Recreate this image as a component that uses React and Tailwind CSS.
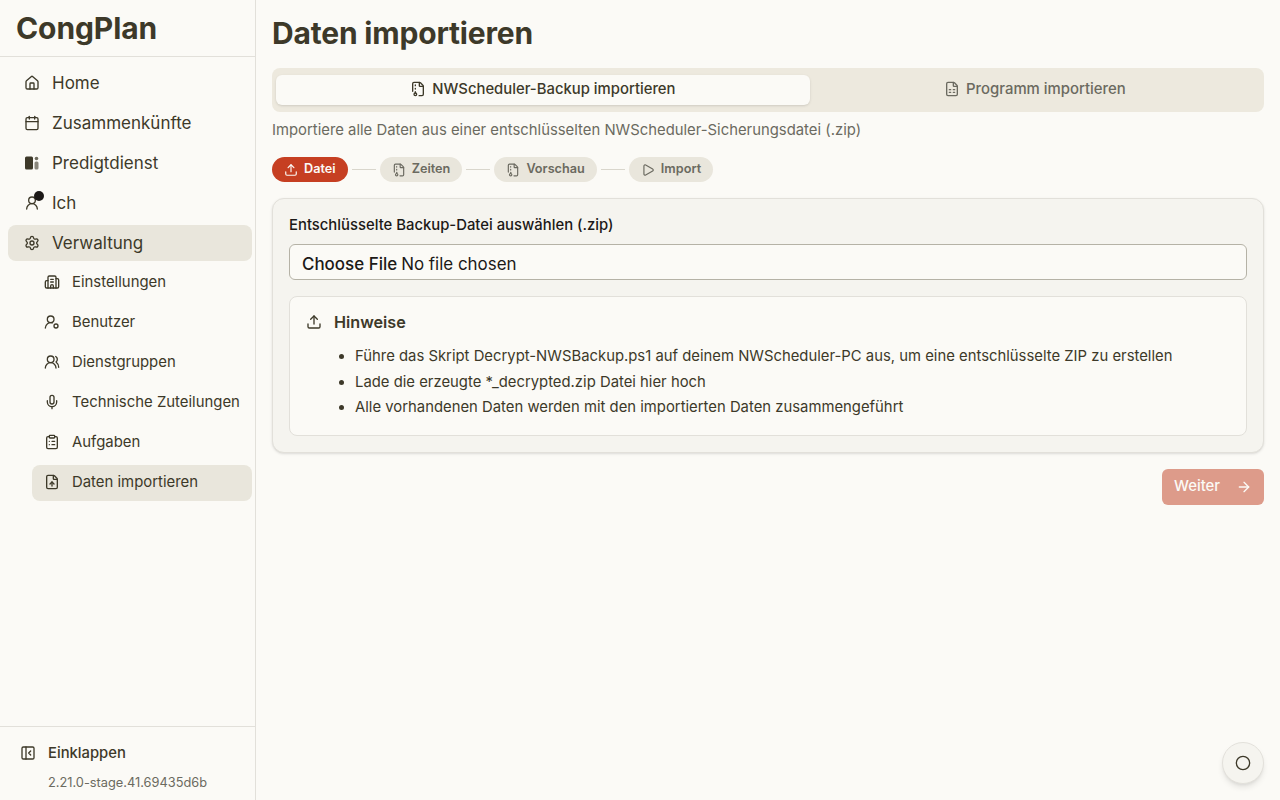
import React from "react";
import {
  House,
  Calendar,
  UserRound,
  Settings,
  Building2,
  UsersRound,
  Mic,
  ClipboardList,
  FileUp,
  FileArchive,
  FileSpreadsheet,
  Upload,
  Play,
  ArrowRight,
  PanelLeftClose,
  Circle,
} from "lucide-react";

const PreachIcon = () => (
  <svg width="16" height="16" viewBox="0 0 16 16" fill="currentColor">
    <rect x="1" y="1.5" width="8" height="13" rx="1.5" />
    <circle cx="12.5" cy="3.5" r="1.8" opacity="0.75" />
    <rect x="10.5" y="6.5" width="4" height="8" rx="1.5" opacity="0.6" />
  </svg>
);

const UserRing = () => (
  <svg width="16" height="16" viewBox="0 0 24 24" fill="none" stroke="currentColor" strokeWidth="2" strokeLinecap="round" strokeLinejoin="round">
    <path d="M2 21a8 8 0 0 1 10.4-7.6" />
    <circle cx="10" cy="8" r="5" />
    <circle cx="18" cy="18" r="3" />
  </svg>
);

const mainNav = [
  { label: "Home", icon: <House size={16} /> },
  { label: "Zusammenkünfte", icon: <Calendar size={16} /> },
  { label: "Predigtdienst", icon: <PreachIcon /> },
  {
    label: "Ich",
    icon: (
      <span className="relative block">
        <UserRound size={16} />
        <span className="absolute -top-[4px] -right-[4px] w-[10px] h-[10px] rounded-full bg-[#1c1917]" />
      </span>
    ),
  },
  { label: "Verwaltung", icon: <Settings size={16} />, active: true },
];

const subNav = [
  { label: "Einstellungen", icon: <Building2 size={16} /> },
  { label: "Benutzer", icon: <UserRing /> },
  { label: "Dienstgruppen", icon: <UsersRound size={16} /> },
  { label: "Technische Zuteilungen", icon: <Mic size={16} /> },
  { label: "Aufgaben", icon: <ClipboardList size={16} /> },
  { label: "Daten importieren", icon: <FileUp size={16} />, active: true },
];

const steps = [
  { label: "Datei", icon: <Upload size={14} />, active: true },
  { label: "Zeiten", icon: <FileArchive size={14} /> },
  { label: "Vorschau", icon: <FileArchive size={14} /> },
  { label: "Import", icon: <Play size={14} /> },
];

export default function App() {
  return (
    <div className="flex h-screen overflow-hidden bg-[#fbfaf6] text-[#3d3929] font-['Inter',sans-serif]">
      <aside className="w-[256px] shrink-0 border-r border-[#e2e0da] flex flex-col">
        <div className="h-[57px] border-b border-[#e2e0da] px-4 flex items-center">
          <h1 className="text-[30px] font-bold leading-none tracking-[-0.1px]">CongPlan</h1>
        </div>
        <nav className="flex-1 pl-2 pr-[3px] py-2 flex flex-col gap-1">
          {mainNav.map((item) => (
            <a
              key={item.label}
              className={`h-9 px-4 flex items-center gap-3 rounded-lg text-[17px] font-normal ${item.active ? "bg-[#e9e6dc]" : ""}`}
            >
              {item.icon}
              <span className="pt-[2px]">{item.label}</span>
            </a>
          ))}
          <div className="ml-6 flex flex-col gap-1">
            {subNav.map((item) => (
              <a
                key={item.label}
                className={`h-9 px-3 pb-[2px] flex items-center gap-3 rounded-lg text-[14.9px] ${item.active ? "bg-[#e9e6dc]" : ""}`}
              >
                {item.icon}
                {item.label}
              </a>
            ))}
          </div>
        </nav>
        <div className="border-t border-[#e2e0da] h-[74px] px-5 pt-[15px]">
          <div className="flex items-center gap-3 text-[14.8px] font-medium">
            <PanelLeftClose size={16} />
            Einklappen
          </div>
          <div className="mt-[11px] ml-7 text-[12.8px] leading-4 text-[#6b6a60]">2.21.0-stage.41.69435d6b</div>
        </div>
      </aside>

      <main className="flex-1 px-4 pt-[15px]">
        <h2 className="text-[30px] leading-[36px] font-bold tracking-[-0.18px]">Daten importieren</h2>
        <div className="mt-[17px] h-[44px] bg-[#ede9de] rounded-lg px-1 py-[7px] flex">
          <button className="flex-auto pb-[2px] flex items-center justify-center gap-[6px] rounded-md bg-[#fbfaf6] shadow-sm text-[14.85px] font-medium">
            <FileArchive size={16} />
            NWScheduler-Backup importieren
          </button>
          <button className="flex-auto pb-[2px] flex items-center justify-center gap-[6px] rounded-md text-[14.9px] font-medium text-[#6b6a60]">
            <FileSpreadsheet size={16} />
            Programm importieren
          </button>
        </div>
        <p className="mt-[8px] text-[14.85px] leading-5 text-[#6b6a60]">
          Importiere alle Daten aus einer entschlüsselten NWScheduler-Sicherungsdatei (.zip)
        </p>

        <div className="mt-[17px] flex items-center gap-1">
          {steps.map((step, i) => (
            <React.Fragment key={step.label}>
              {i > 0 && <div className="w-6 h-px bg-[#d9d6cc]" />}
              <div
                className={`h-[25px] px-3 pb-[2px] flex items-center gap-[6px] rounded-full text-[12.7px] font-semibold ${step.active ? "bg-[#c63f22] text-[#fbfaf6]" : "bg-[#e9e6dc] text-[#6b6a60]"}`}
              >
                <span className="pt-[2px]">{step.icon}</span>
                {step.label}
              </div>
            </React.Fragment>
          ))}
        </div>

        <section className="mt-4 bg-[#f5f4ef] border border-[#e2e0da] rounded-xl shadow-sm p-4">
          <label className="block text-[14.85px] font-medium text-[#1c1917] leading-5">
            Entschlüsselte Backup-Datei auswählen (.zip)
          </label>
          <div className="mt-[9px] h-9 px-3 pt-[5px] flex items-center border border-[#b5b2a6] rounded-md bg-[#fbfaf6] text-[16.95px] text-[#1c1917]">
            <span className="font-medium mr-1">Choose File</span>
            No file chosen
          </div>
          <div className="mt-4 bg-[#fbfaf6] border border-[#e2e0da] rounded-lg px-4 pt-[13px] pb-[14px]">
            <div className="flex items-center gap-3 font-semibold text-[16.2px] leading-6">
              <Upload size={16} />
              Hinweise
            </div>
            <ul className="mt-[10px] ml-[49px] list-disc text-[14.85px] leading-[25.5px]">
              <li>Führe das Skript Decrypt-NWSBackup.ps1 auf deinem NWScheduler-PC aus, um eine entschlüsselte ZIP zu erstellen</li>
              <li>Lade die erzeugte *_decrypted.zip Datei hier hoch</li>
              <li>Alle vorhandenen Daten werden mit den importierten Daten zusammengeführt</li>
            </ul>
          </div>
        </section>

        <div className="mt-4 flex justify-end">
          <button className="h-9 w-[102px] px-3 flex items-center justify-between rounded-md bg-[#dd9b8a] text-[14.9px] font-medium text-[#fbfaf6]">
            Weiter
            <ArrowRight size={16} />
          </button>
        </div>
      </main>

      <button className="fixed right-4 bottom-4 w-[42px] h-[42px] rounded-full bg-[#f5f4ef] border border-[#e2e0da] shadow-md flex items-center justify-center text-[#3d3929]">
        <Circle size={16} />
      </button>
    </div>
  );
}
